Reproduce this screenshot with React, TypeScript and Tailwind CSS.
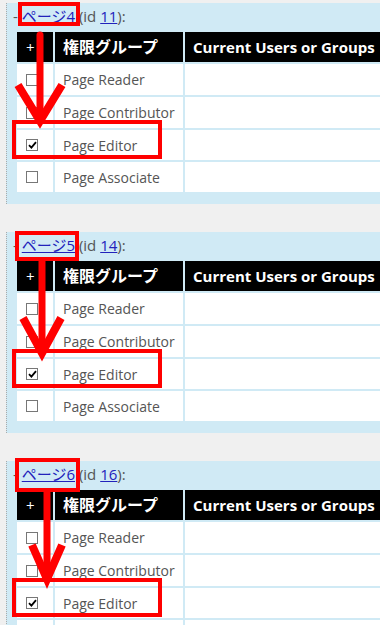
import React from 'react';

type Section = {
  page: string;
  id: string;
  checked: string;
  link: { x: number; y: number; w: number; h: number };
  arrow: { x: number; top: number; armY: number; armDx: number; tip: number };
};

const sections: Section[] = [
  { page: 'ページ4', id: '11', checked: 'Page Editor', link: { x: 20, y: 1, w: 58, h: 20 }, arrow: { x: 40, top: 32, armY: 82, armDx: 22, tip: 118 } },
  { page: 'ページ5', id: '14', checked: 'Page Editor', link: { x: 17, y: 1, w: 60, h: 26 }, arrow: { x: 42, top: 29, armY: 86, armDx: 19, tip: 121 } },
  { page: 'ページ6', id: '16', checked: 'Page Editor', link: { x: 17, y: -1, w: 61, h: 30 }, arrow: { x: 47, top: 31, armY: 84, armDx: 15, tip: 118 } },
];

const roles = ['Page Reader', 'Page Contributor', 'Page Editor', 'Page Associate'];

function CheckBox({ checked }: { checked: boolean }) {
  return (
    <span className="flex h-[12px] w-[12px] items-center justify-center border border-[#777] bg-white">
      {checked && (
        <svg width="9" height="8" viewBox="0 0 9 8">
          <path d="M1 4.2 L3.4 6.6 L8 1.2" fill="none" stroke="#000" strokeWidth="1.8" />
        </svg>
      )}
    </span>
  );
}

function Annotations({ s }: { s: Section }) {
  const a = s.arrow;
  return (
    <svg className="pointer-events-none absolute left-0 top-0 overflow-visible" width="380" height="200">
      <rect x={s.link.x} y={s.link.y} width={s.link.w} height={s.link.h} fill="none" stroke="#ff0000" strokeWidth="4" />
      <line x1={a.x} y1={a.top} x2={a.x} y2={a.tip - 4} stroke="#ff0000" strokeWidth="7" strokeLinecap="round" />
      <path d={`M${a.x - a.armDx} ${a.armY} L${a.x} ${a.tip} L${a.x + a.armDx} ${a.armY}`} fill="none" stroke="#ff0000" strokeWidth="8" strokeLinejoin="miter" />
      <rect x="14" y="119" width="146" height="35" fill="none" stroke="#ff0000" strokeWidth="4" />
    </svg>
  );
}

function Panel({ s }: { s: Section }) {
  return (
    <div className="relative h-[201px] w-[380px] shrink-0">
      <div className="ml-[6px] h-full w-[420px] border-l border-dotted border-[#aaa] bg-[#d0eaf5] pt-[1px]">
        <div className="flex h-[24px] items-center pl-[6px] text-[15px] text-[#555]">
          <span>-&nbsp;</span>
          <span className="text-[#2222bb] underline">{s.page}</span>
          <span>&nbsp;(id&nbsp;</span>
          <span className="text-[#2222bb] underline">{s.id}</span>
          <span>):</span>
        </div>
        <table className="ml-[8px] mt-[2px] border-separate border-spacing-[2px]">
          <thead>
            <tr className="h-[30px] bg-black text-white">
              <th className="w-[36px] pl-[9px] text-left align-middle text-[15px] font-normal">+</th>
              <th className="w-[128px] pl-[8px] text-left text-[16px] font-bold">権限グループ</th>
              <th className="w-[230px] pl-[8px] text-left text-[15px] font-bold whitespace-nowrap">Current Users or Groups</th>
            </tr>
          </thead>
          <tbody>
            {roles.map((r, i) => (
              <tr key={r} className={`${i < 2 ? 'h-[31px]' : 'h-[30px]'} bg-white text-[14px] text-[#555]`}>
                <td className="pl-[9px] align-middle">
                  <CheckBox checked={r === s.checked} />
                </td>
                <td className="pl-[8px] whitespace-nowrap">{r}</td>
                <td></td>
              </tr>
            ))}
          </tbody>
        </table>
      </div>
      <Annotations s={s} />
    </div>
  );
}

export default function App() {
  return (
    <div
      className="flex h-[625px] w-[380px] flex-col gap-[28px] overflow-hidden bg-[#f0f0f0] pt-[3px]"
      style={{ fontFamily: '"Open Sans", "Noto Sans CJK JP", sans-serif' }}
    >
      {sections.map((s) => (
        <Panel key={s.page} s={s} />
      ))}
    </div>
  );
}
